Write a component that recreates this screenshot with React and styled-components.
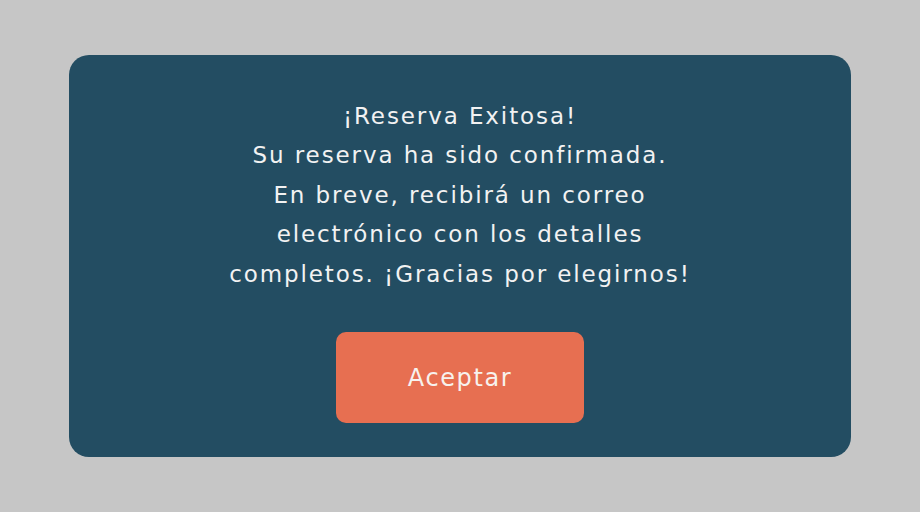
import React from "react";
import styled, { createGlobalStyle } from "styled-components";

const GlobalStyle = createGlobalStyle`
  html, body {
    margin: 0;
    padding: 0;
    height: 100%;
    background: #c6c6c6;
  }
  #root {
    height: 100%;
  }
`;

const Page = styled.div`
  height: 100%;
  display: flex;
  align-items: center;
  justify-content: center;
  font-family: "DejaVu Sans", "Noto Sans", sans-serif;
`;

const Card = styled.div`
  width: 782px;
  height: 402px;
  box-sizing: border-box;
  padding-top: 8px;
  background: #234d62;
  border-radius: 20px;
  display: flex;
  flex-direction: column;
  align-items: center;
  justify-content: center;
  gap: 38px;
`;

const Message = styled.p`
  margin: 0;
  color: #f2f2f2;
  font-size: 23px;
  letter-spacing: 1.9px;
  line-height: 39.5px;
  text-align: center;
`;

const Button = styled.button`
  width: 248px;
  height: 91px;
  border: none;
  border-radius: 10px;
  background: #e76f51;
  color: #f7f2ee;
  font-family: inherit;
  font-size: 24px;
  letter-spacing: 1.6px;
  cursor: pointer;
`;

const App = () => {
  return (
    <>
      <GlobalStyle />
      <Page>
        <Card>
          <Message>
            ¡Reserva Exitosa!
            <br />
            Su reserva ha sido confirmada.
            <br />
            En breve, recibirá un correo
            <br />
            electrónico con los detalles
            <br />
            completos. ¡Gracias por elegirnos!
          </Message>
          <Button>Aceptar</Button>
        </Card>
      </Page>
    </>
  );
};

export default App;
